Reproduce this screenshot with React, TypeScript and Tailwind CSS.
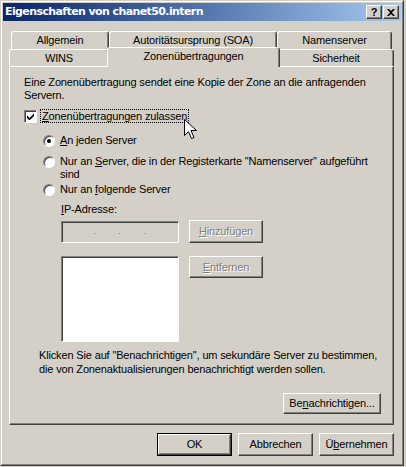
import React from 'react';

const raised =
  'border border-t-white border-l-white border-r-[#404040] border-b-[#404040] shadow-[inset_-1px_-1px_#808080]';
const sunken =
  'border border-t-[#808080] border-l-[#808080] border-r-white border-b-white shadow-[inset_1px_1px_#404040]';
const disabledText = 'text-[#808080] [text-shadow:1px_1px_0_#ffffff]';

function Tab({ label, width, selected }: { label: string; width: string; selected?: boolean }) {
  return (
    <div
      className={`${width} flex items-start justify-center rounded-t-[3px] border-l border-t border-r border-white border-r-[#404040] bg-[#d4d0c8] shadow-[inset_-1px_0_#808080] ${
        selected ? 'relative z-10 -mx-[2px] -mt-[2px] h-[20px] pt-[2px]' : 'h-full pt-[2px]'
      }`}
    >
      <span className="leading-[13px]">{label}</span>
    </div>
  );
}

function Button({
  children,
  className = '',
  disabled,
  isDefault,
}: {
  children: React.ReactNode;
  className?: string;
  disabled?: boolean;
  isDefault?: boolean;
}) {
  if (isDefault) {
    return (
      <div className={`border border-black ${className}`}>
        <div className={`flex h-full w-full items-center justify-center ${raised}`}>{children}</div>
      </div>
    );
  }
  return (
    <div className={`flex items-center justify-center ${raised} ${disabled ? disabledText : ''} ${className}`}>
      {children}
    </div>
  );
}

function Radio({ checked }: { checked?: boolean }) {
  return (
    <div className="relative mt-[1px] h-[12px] w-[12px] shrink-0 rounded-full border border-t-[#808080] border-l-[#808080] border-r-white border-b-white bg-white shadow-[inset_1px_1px_#404040]">
      {checked && <div className="absolute left-[3px] top-[3px] h-[4px] w-[4px] rounded-full bg-black" />}
    </div>
  );
}

export default function App() {
  return (
    <div className="relative h-[467px] w-[406px] overflow-hidden bg-[#d4d0c8] text-[11px] tracking-[-0.15px] text-black [font-family:'Liberation_Sans',Arial,sans-serif]">
      <div className="h-[466px] w-[404px] border border-t-[#d4d0c8] border-l-[#d4d0c8] border-r-[#404040] border-b-[#404040]">
        <div className="h-full w-full border border-t-white border-l-white border-r-[#808080] border-b-[#808080] p-[1px]">
          {/* title bar */}
          <div className="flex h-[18px] items-center justify-between bg-gradient-to-r from-[#0a246a] to-[#a6caf0] pl-[2px] pr-[2px]">
            <span className="text-[11px] font-bold tracking-[-0.6px] text-white [font-family:'DejaVu_Sans',Verdana,sans-serif]">
              Eigenschaften von chanet50.intern
            </span>
            <div className="flex gap-[1px]">
              <div className={`flex h-[14px] w-[16px] items-center justify-center bg-[#d4d0c8] text-[11px] font-bold leading-none ${raised}`}>
                ?
              </div>
              <div className={`flex h-[14px] w-[16px] items-center justify-center bg-[#d4d0c8] ${raised}`}>
                <svg width="8" height="7" viewBox="0 0 8 7">
                  <path d="M0 0h2l2 2 2-2h2L5 3.5 8 7H6L4 5 2 7H0l3-3.5z" fill="#000" />
                </svg>
              </div>
            </div>
          </div>

          <div className="pl-[6px]">
            {/* tabs */}
            <div className="mt-[10px] flex h-[18px] pl-[2px]">
              <Tab label="Allgemein" width="w-[98px]" />
              <Tab label="Autoritätsursprung (SOA)" width="w-[168px]" />
              <Tab label="Namenserver" width="w-[115px]" />
            </div>
            <div className="flex h-[17px] items-start">
              <Tab label="WINS" width="w-[100px]" />
              <Tab label="Zonenübertragungen" width="w-[173px]" selected />
              <Tab label="Sicherheit" width="w-[116px]" />
            </div>

            {/* panel */}
            <div className="flex h-[359px] w-[385px] flex-col border border-t-white border-l-white border-r-[#404040] border-b-[#404040] pl-[14px] pt-[9px] shadow-[inset_-1px_-1px_#808080]">
              <p className="leading-[13px]">
                Eine Zonenübertragung sendet eine Kopie der Zone an die anfragenden
                <br />
                Servern.
              </p>

              <div className="mt-[7px] flex items-center gap-[3px]">
                <div className={`flex h-[13px] w-[13px] items-center justify-center bg-white ${sunken}`}>
                  <svg width="7" height="7" viewBox="0 0 7 7">
                    <path d="M0 2.5L2.5 5 7 0.5V3L2.5 7.5 0 5z" fill="#000" />
                  </svg>
                </div>
                <span className="border border-dotted border-black px-[1px] leading-[12px]">
                  <u>Z</u>onenübertragungen zulassen
                </span>
              </div>

              <div className="ml-[19px] flex flex-col">
                <div className="mt-[11px] flex gap-[5px] leading-[13px]">
                  <Radio checked />
                  <span>
                    <u>A</u>n jeden Server
                  </span>
                </div>
                <div className="mt-[8px] flex gap-[5px] leading-[13px]">
                  <Radio />
                  <span>
                    Nur an <u>S</u>erver, die in der Registerkarte "Namenserver" aufgeführt
                    <br />
                    sind
                  </span>
                </div>
                <div className="mt-[2px] flex gap-[5px] leading-[13px]">
                  <Radio />
                  <span>
                    Nur an <u>f</u>olgende Server
                  </span>
                </div>

                <div className="ml-[18px] flex flex-col">
                  <span className="mt-[7px] leading-[13px]">
                    <u>I</u>P-Adresse:
                  </span>
                  <div className="mt-[5px] flex items-start gap-[10px]">
                    <div className={`flex h-[22px] w-[118px] items-center justify-around bg-[#d4d0c8] px-[20px] pt-[2px] ${sunken}`}>
                      <span className="h-[1px] w-[1px] bg-[#808080]" />
                      <span className="h-[1px] w-[1px] bg-[#808080]" />
                      <span className="h-[1px] w-[1px] bg-[#808080]" />
                    </div>
                    <Button disabled className="-mt-[1px] h-[23px] w-[74px]">
                      <span>
                        <u>H</u>inzufügen
                      </span>
                    </Button>
                  </div>
                  <div className="mt-[13px] flex items-start gap-[10px]">
                    <div className={`h-[86px] w-[118px] bg-white ${sunken}`} />
                    <Button disabled className="h-[22px] w-[74px]">
                      <span>
                        <u>E</u>ntfernen
                      </span>
                    </Button>
                  </div>
                </div>
              </div>

              <p className="ml-[15px] mt-[6px] leading-[14px]">
                Klicken Sie auf "Benachrichtigen", um sekundäre Server zu bestimmen,
                <br />
                die von Zonenaktualisierungen benachrichtigt werden sollen.
              </p>

              <Button className="mr-[12px] mt-[17px] h-[21px] w-[98px] self-end">
                <span>
                  Be<u>n</u>achrichtigen...
                </span>
              </Button>
            </div>

            {/* dialog buttons */}
            <div className="mt-[8px] flex w-[385px] justify-end gap-[6px]">
              <Button isDefault className="h-[23px] w-[75px]">
                OK
              </Button>
              <Button className="h-[23px] w-[75px]">Abbrechen</Button>
              <Button className="h-[23px] w-[75px]">
                <span>
                  Ü<u>b</u>ernehmen
                </span>
              </Button>
            </div>
          </div>
        </div>
      </div>

      {/* mouse cursor */}
      <svg className="absolute left-[184px] top-[119px]" width="13" height="20" viewBox="0 0 13 20">
        <path
          d="M0.5 0.5V16.5L4.5 12.5L7.5 19.5L10 18.5L7 11.5H12.5Z"
          fill="#fff"
          stroke="#000"
          strokeWidth="1"
          strokeLinejoin="miter"
        />
      </svg>
    </div>
  );
}
